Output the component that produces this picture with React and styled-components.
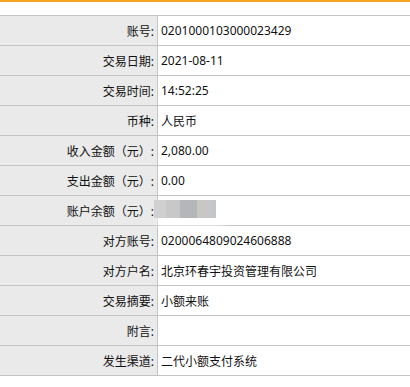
import styled, { createGlobalStyle } from "styled-components";

const GlobalStyle = createGlobalStyle`
    html, body {
        margin: 0;
        padding: 0;
        background: #fff;
    }
    body {
        font-family: "Noto Sans", "Noto Sans CJK SC", sans-serif;
        font-size: 12px;
        color: #111;
    }
`;

const rows = [
    { label: "账号:", value: "0201000103000023429" },
    { label: "交易日期:", value: "2021-08-11" },
    { label: "交易时间:", value: "14:52:25" },
    { label: "币种:", value: "人民币" },
    { label: "收入金额（元）:", value: "2,080.00" },
    { label: "支出金额（元）:", value: "0.00" },
    { label: "账户余额（元）:", value: "", hidden: true },
    { label: "对方账号:", value: "0200064809024606888" },
    { label: "对方户名:", value: "北京环春宇投资管理有限公司" },
    { label: "交易摘要:", value: "小额来账" },
    { label: "附言:", value: "" },
    { label: "发生渠道:", value: "二代小额支付系统" },
];

// mosaic colours over the balance
const mosaic = [
    { w: 12, c: "#d0d0d0" },
    { w: 14, c: "#c8c8c8" },
    { w: 17, c: "#b4b6b9" },
    { w: 13, c: "#c9c7c3" },
    { w: 6, c: "#c4c7ca" },
];

export default function App() {
    return (
        <Page>
            <GlobalStyle />
            <TopBar />
            <DetailTable>
                {rows.map((row) => (
                    <Row key={row.label}>
                        <Label>{row.label}</Label>
                        <Value>
                            {row.value}
                            {row.hidden && (
                                <Mosaic>
                                    {mosaic.map((m, i) => (
                                        <Tile key={i} $w={m.w} $c={m.c} />
                                    ))}
                                </Mosaic>
                            )}
                        </Value>
                    </Row>
                ))}
            </DetailTable>
        </Page>
    );
}

const Page = styled.div`
    width: 410px;
    height: 387px;
    overflow: hidden;
`;

const TopBar = styled.div`
    height: 2px;
    background: #f6a423;
    margin-bottom: 13px;
`;

const DetailTable = styled.div`
    border-top: 1px solid #c4c4c4;
`;

const Row = styled.div`
    display: grid;
    grid-template-columns: 158px 1fr;
    height: 30px;
    box-sizing: border-box;
    border-bottom: 1px solid #c4c4c4;
`;

const Label = styled.div`
    background: #e9eae9;
    border-right: 1px solid #c4c4c4;
    display: flex;
    align-items: center;
    justify-content: flex-end;
    padding-right: 3px;
    white-space: nowrap;
`;

const Value = styled.div`
    position: relative;
    display: flex;
    align-items: center;
    padding-left: 3px;
    white-space: nowrap;
`;

const Mosaic = styled.div`
    position: absolute;
    left: -4px;
    top: 4px;
    height: 18px;
    display: flex;
    box-shadow: 6px 5px 6px 2px #fff;
`;

const Tile = styled.div`
    width: ${(p) => p.$w}px;
    height: 100%;
    background: ${(p) => p.$c};
`;
